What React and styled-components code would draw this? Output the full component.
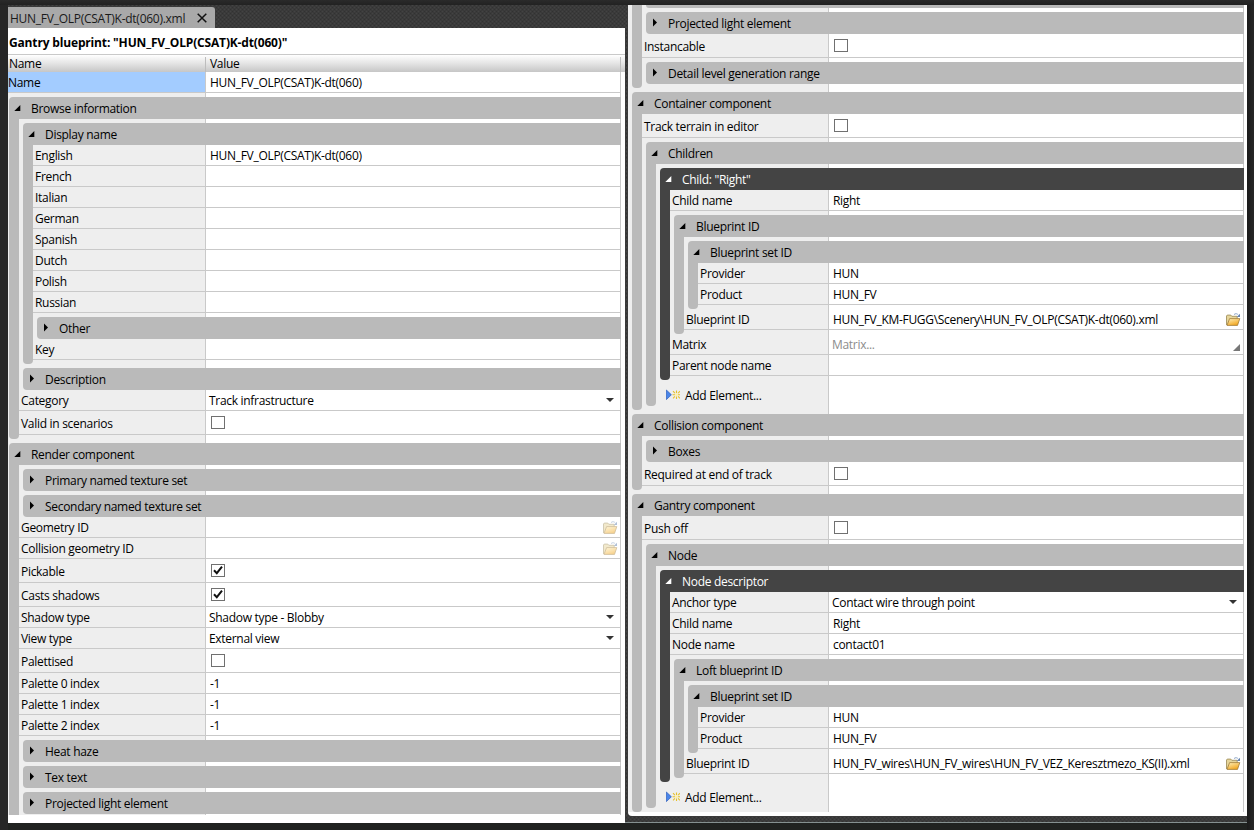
import styled, { createGlobalStyle, css } from 'styled-components';

const GlobalStyle = createGlobalStyle`
  * {
    box-sizing: border-box;
  }
  body {
    margin: 0;
    background: #262626;
    color: #000;
    font-family: 'Open Sans', 'Noto Sans', sans-serif;
    font-size: 12px;
    letter-spacing: -0.3px;
  }
`;

const line = '#c9c9c9';
const grey = '#bababa';
const dark = '#444';

const dots = css`
  background-color: #323232;
  background-image: radial-gradient(circle, #444 0.7px, transparent 0.9px),
    radial-gradient(circle, #444 0.7px, transparent 0.9px);
  background-size: 4px 4px;
  background-position: 0.5px 0.5px, 2.5px 2.5px;
`;

const Screen = styled.div`
  width: 1254px;
  height: 830px;
  padding: 5px 7px 0 8px;
  overflow: hidden;
  background: linear-gradient(#2a2a2a, #222 5px, transparent 5px),
    linear-gradient(to right, transparent 1246px, #1b1b1b 1247px, #272727 1254px), #262626;
`;

const Workspace = styled.div`
  display: flex;
  height: 818px;
  border-bottom: 1px solid #859090;
  ${dots}
`;

const Footer = styled.div`
  height: 7px;
  background: #202220;
`;

const Editor = styled.div`
  width: 617px;
  height: 818px;
  display: flex;
  flex-direction: column;
  padding-top: 2px;
`;

const Tab = styled.div`
  width: 207px;
  height: 21px;
  padding: 1px 0 0 2px;
  display: flex;
  align-items: center;
  border-radius: 0 3px 0 0;
  background: #a9a9a9;
  color: #1a1a1a;
  letter-spacing: -0.26px;
  flex: none;

  svg {
    margin-left: auto;
    margin-right: 8px;
  }
`;

const Sheet = styled.div`
  flex: 1;
  background: #fff;
`;

const Title = styled.div`
  height: 27px;
  padding: 2px 0 0 1px;
  line-height: 25px;
  border-bottom: 1px solid ${line};
  font-weight: bold;
  letter-spacing: -0.16px;
`;

const ColumnHeads = styled.div`
  height: 17px;
  display: flex;
  align-items: flex-end;
  line-height: 14px;
  background: linear-gradient(#fff, #e4e4e4 50%, #c6c6c6);
`;

const ColumnHead = styled.div`
  width: ${({ $width }) => $width}px;
  height: 15px;
  padding-left: ${({ $pad }) => $pad}px;
  border-right: 1px solid #bdbdbd;
`;

const SidePanel = styled.div`
  width: 619px;
  height: 811px;
  margin-left: 3px;
  overflow: hidden;
  border-radius: 0 0 0 4px;
  background: #fff;
`;

const Tree = styled.div`
  width: ${({ $names }) => $names + 416}px;
  height: ${({ $height }) => $height}px;
  overflow: hidden;
  background: linear-gradient(
    to right,
    #eee ${({ $names }) => $names}px,
    ${line} ${({ $names }) => $names}px ${({ $names }) => $names + 1}px,
    #fff ${({ $names }) => $names + 1}px ${({ $names }) => $names + 415}px,
    ${line} ${({ $names }) => $names + 415}px
  );
`;

const Groups = styled.div`
  margin-left: ${({ $shift }) => $shift}px;
`;

const GroupBox = styled.div`
  margin: 4px 0 0 4px;
`;

const GroupHead = styled.div`
  height: 22px;
  display: flex;
  align-items: center;
  padding-left: 5px;
  border-radius: ${({ $open }) => ($open ? '4px 0 0 0' : '4px 0 0 4px')};
  background: ${({ $dark }) => ($dark ? dark : grey)};
  color: ${({ $dark }) => ($dark ? '#fff' : '#000')};

  svg {
    margin-right: 9px;
  }
`;

const GroupTitle = styled.span`
  padding-top: 1px;
`;

const GroupBody = styled.div`
  display: flex;
`;

const Strip = styled.div`
  width: 10px;
  border-radius: 0 0 4px 4px;
  background: ${({ $dark }) => ($dark ? dark : grey)};
`;

const GroupContent = styled.div`
  flex: 1;
  min-width: 0;
  padding-bottom: 4px;
`;

const CutBar = styled.div`
  height: 3px;
  margin-left: 4px;
  border-radius: 0 0 0 4px;
  background: ${grey};
`;

const RowBox = styled.div`
  height: ${({ $tall }) => ($tall ? 24 : 21)}px;
  display: flex;
  line-height: ${({ $tall }) => ($tall ? 26 : 22)}px;
  border-bottom: 1px solid ${line};
  border-right: 1px solid ${line};
`;

const RowName = styled.div`
  flex: 1;
  height: 100%;
  padding-left: ${({ $selected }) => ($selected ? 0 : 2)}px;
  background: ${({ $selected }) => ($selected ? '#a3ccff' : 'transparent')};
  white-space: nowrap;
`;

const RowValue = styled.div`
  width: 416px;
  height: 100%;
  margin-right: -1px;
  padding: 0 4px 0 ${({ $pad }) => $pad}px;
  border-left: 1px solid ${line};
  display: flex;
  align-items: center;
  color: ${({ $muted }) => ($muted ? '#8c8c8c' : '#000')};
  white-space: nowrap;

  > svg {
    margin-left: auto;
  }
`;

const ValueText = styled.span`
  padding-top: 2px;
`;

const Check = styled.div`
  width: 14px;
  height: 13px;
  margin-left: 1px;
  margin-bottom: 1px;
  display: flex;
  border: 1px solid #707070;
  background: #fff;
`;

const AddRow = styled.div`
  height: 22px;
  padding: 10px 0 0 10px;
  display: flex;
  align-items: center;
  gap: 5px;
  line-height: 20px;

  svg {
    margin-bottom: 3px;
  }
`;

const FolderIcon = styled.svg`
  margin-right: -1px;
  opacity: ${({ $disabled }) => ($disabled ? 0.5 : 1)};
`;

const CornerIcon = styled.svg`
  margin-top: 7px;
`;

const Arrow = ({ open }) => (
  <svg width="8" height="10" viewBox="0 0 8 10" fill="currentColor">
    {open ? <path d="M6.3 2v6H.3z" /> : <path d="M2 .6l4 4-4 4z" />}
  </svg>
);

const CloseIcon = () => (
  <svg width="10" height="10" viewBox="0 0 10 10" fill="none" stroke="#111" strokeWidth="1.5">
    <path d="M.7.7l8.6 8.6M9.3.7L.7 9.3" />
  </svg>
);

const Caret = () => (
  <svg width="14" height="4" viewBox="0 0 14 4" fill="#333">
    <path d="M3 0h8L7 4z" />
  </svg>
);

const Corner = () => (
  <CornerIcon width="7" height="7" viewBox="0 0 7 7" fill="#777">
    <path d="M7 0v7H0z" />
  </CornerIcon>
);

const Folder = ({ disabled }) => (
  <FolderIcon width="15" height="13" viewBox="0 0 15 13" $disabled={disabled}>
    <defs>
      <linearGradient id="front" x1="0" y1="0" x2="0.6" y2="1">
        <stop offset="0" stopColor="#fff2bd" />
        <stop offset="1" stopColor="#f2a61e" />
      </linearGradient>
    </defs>
    <path d="M.5 12V3l.7-.9h3.6l1 1.2h5.4V6" fill="#e6d59a" stroke="#a39260" strokeWidth="0.9" />
    <path d="M1 12.4L3.6 5.6h10.2L11.5 12.4z" fill="url(#front)" stroke="#a07c3a" strokeWidth="0.8" />
    <path d="M8 1.6C9.2.3 11.2.4 12.3 2" fill="none" stroke="#8ea6c8" />
    <path d="M14 .8V4h-3.2z" fill="#6482b0" />
  </FolderIcon>
);

const AddIcon = () => (
  <svg width="14" height="12" viewBox="0 0 14 12">
    <path d="M.4 1v9.6L5.4 5.8z" fill="#4a86ea" stroke="#2a5cbc" strokeWidth="0.7" />
    <g stroke="#e6c02c" strokeWidth="1.1">
      <path d="M10.5 1.5V4M10.5 7.5V10M6.5 5.75H9M12 5.75h2" />
      <path d="M7 2.2l1.9 1.9M14 2.2l-1.9 1.9M7 9.3l1.9-1.9M14 9.3l-1.9-1.9" />
    </g>
    <circle cx="10.5" cy="5.75" r="1.4" fill="#fff0a0" />
  </svg>
);

const Tick = () => (
  <svg width="12" height="11" viewBox="0 0 12 11" fill="none" stroke="#111" strokeWidth="2">
    <path d="M2 5.3l2.8 2.9L10 1.7" />
  </svg>
);

function Group({ title, dark: isDark, children }) {
  const open = Boolean(children);
  return (
    <GroupBox>
      <GroupHead $open={open} $dark={isDark}>
        <Arrow open={open} />
        <GroupTitle>{title}</GroupTitle>
      </GroupHead>
      {open && (
        <GroupBody>
          <Strip $dark={isDark} />
          <GroupContent>{children}</GroupContent>
        </GroupBody>
      )}
    </GroupBox>
  );
}

function Row({ name, value, kind, selected, disabled }) {
  const isCheck = kind === 'check';
  const pad = kind === 'select' || kind === 'matrix' ? 3 : 4;
  return (
    <RowBox $tall={isCheck}>
      <RowName $selected={selected}>{name}</RowName>
      <RowValue $pad={pad} $muted={kind === 'matrix'}>
        {isCheck ? <Check>{value && <Tick />}</Check> : <ValueText>{value}</ValueText>}
        {kind === 'select' && <Caret />}
        {kind === 'file' && <Folder disabled={disabled} />}
        {kind === 'matrix' && <Corner />}
      </RowValue>
    </RowBox>
  );
}

const AddElement = () => (
  <AddRow>
    <AddIcon />
    Add Element...
  </AddRow>
);

const languages = ['French', 'Italian', 'German', 'Spanish', 'Dutch', 'Polish', 'Russian'];

function App() {
  return (
    <Screen>
      <GlobalStyle />
      <Workspace>
        <Editor>
          <Tab>
            HUN_FV_OLP(CSAT)K-dt(060).xml
            <CloseIcon />
          </Tab>
          <Sheet>
            <Title>Gantry blueprint: "HUN_FV_OLP(CSAT)K-dt(060)"</Title>
            <ColumnHeads>
              <ColumnHead $width={198} $pad={1}>Name</ColumnHead>
              <ColumnHead $width={415} $pad={4}>Value</ColumnHead>
            </ColumnHeads>
            <Tree $names={197} $height={743}>
              <Row name="Name" value="HUN_FV_OLP(CSAT)K-dt(060)" selected />
              <Groups $shift={-3}>
                <Group title="Browse information">
                  <Group title="Display name">
                    <Row name="English" value="HUN_FV_OLP(CSAT)K-dt(060)" />
                    {languages.map((language) => (
                      <Row key={language} name={language} />
                    ))}
                    <Group title="Other" />
                    <Row name="Key" />
                  </Group>
                  <Group title="Description" />
                  <Row name="Category" value="Track infrastructure" kind="select" />
                  <Row name="Valid in scenarios" kind="check" />
                </Group>
                <Group title="Render component">
                  <Group title="Primary named texture set" />
                  <Group title="Secondary named texture set" />
                  <Row name="Geometry ID" kind="file" disabled />
                  <Row name="Collision geometry ID" kind="file" disabled />
                  <Row name="Pickable" kind="check" value />
                  <Row name="Casts shadows" kind="check" value />
                  <Row name="Shadow type" value="Shadow type - Blobby" kind="select" />
                  <Row name="View type" value="External view" kind="select" />
                  <Row name="Palettised" kind="check" />
                  <Row name="Palette 0 index" value="-1" />
                  <Row name="Palette 1 index" value="-1" />
                  <Row name="Palette 2 index" value="-1" />
                  <Group title="Heat haze" />
                  <Group title="Tex text" />
                  <Group title="Projected light element" />
                </Group>
              </Groups>
            </Tree>
          </Sheet>
        </Editor>
        <SidePanel>
          <Tree $names={200} $height={807}>
            <Groups $shift={4}>
              <GroupBody>
                <Strip />
                <GroupContent>
                  <CutBar />
                  <Group title="Projected light element" />
                  <Row name="Instancable" kind="check" />
                  <Group title="Detail level generation range" />
                </GroupContent>
              </GroupBody>
            </Groups>
            <Groups $shift={0}>
              <Group title="Container component">
                <Row name="Track terrain in editor" kind="check" />
                <Group title="Children">
                  <Group title={'Child: "Right"'} dark>
                    <Row name="Child name" value="Right" />
                    <Group title="Blueprint ID">
                      <Group title="Blueprint set ID">
                        <Row name="Provider" value="HUN" />
                        <Row name="Product" value="HUN_FV" />
                      </Group>
                      <Row
                        name="Blueprint ID"
                        value="HUN_FV_KM-FUGG\Scenery\HUN_FV_OLP(CSAT)K-dt(060).xml"
                        kind="file"
                      />
                    </Group>
                    <Row name="Matrix" value="Matrix..." kind="matrix" />
                    <Row name="Parent node name" />
                  </Group>
                  <AddElement />
                </Group>
              </Group>
              <Group title="Collision component">
                <Group title="Boxes" />
                <Row name="Required at end of track" kind="check" />
              </Group>
              <Group title="Gantry component">
                <Row name="Push off" kind="check" />
                <Group title="Node">
                  <Group title="Node descriptor" dark>
                    <Row name="Anchor type" value="Contact wire through point" kind="select" />
                    <Row name="Child name" value="Right" />
                    <Row name="Node name" value="contact01" />
                    <Group title="Loft blueprint ID">
                      <Group title="Blueprint set ID">
                        <Row name="Provider" value="HUN" />
                        <Row name="Product" value="HUN_FV" />
                      </Group>
                      <Row
                        name="Blueprint ID"
                        value="HUN_FV_wires\HUN_FV_wires\HUN_FV_VEZ_Keresztmezo_KS(II).xml"
                        kind="file"
                      />
                    </Group>
                  </Group>
                  <AddElement />
                </Group>
              </Group>
            </Groups>
          </Tree>
        </SidePanel>
      </Workspace>
      <Footer />
    </Screen>
  );
}

export default App;
